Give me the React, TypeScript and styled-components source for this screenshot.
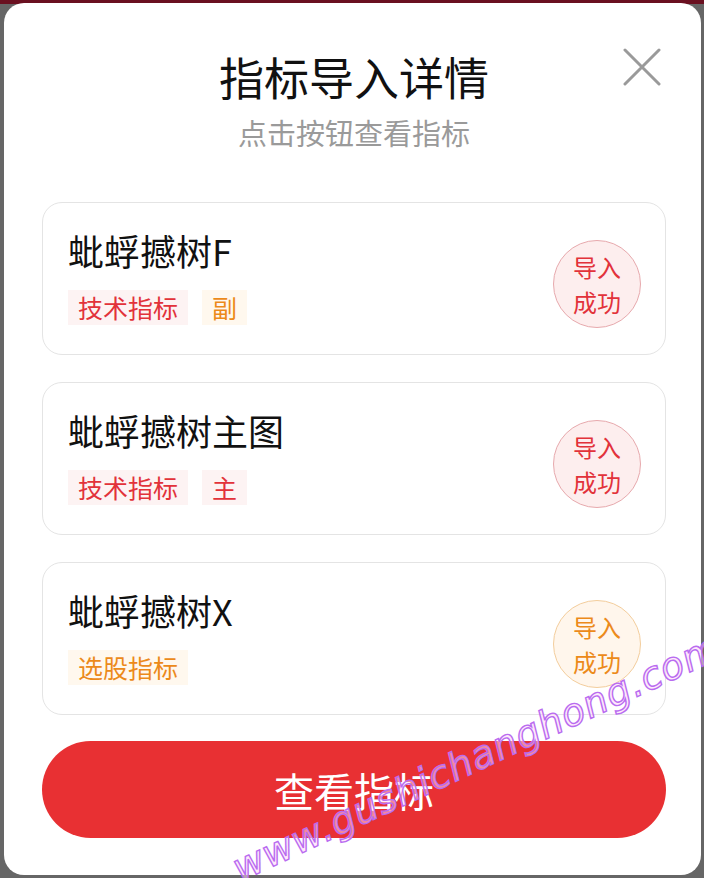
import React from "react";
import styled, { createGlobalStyle } from "styled-components";

const Global = createGlobalStyle`
  html, body { margin: 0; padding: 0; }
  body {
    background: #666666;
    font-family: "Noto Sans CJK SC", "Noto Sans", sans-serif;
    width: 704px;
    height: 878px;
    overflow: hidden;
  }
`;

const Page = styled.div`
  position: relative;
  width: 704px;
  height: 878px;
  box-sizing: border-box;
  padding: 3px 3px 3px 4px;
  background: linear-gradient(#6a1020 0, #6a1020 4px, #666666 4px);
  overflow: hidden;
`;

const Modal = styled.div`
  position: relative;
  height: 872px;
  box-sizing: border-box;
  background: #ffffff;
  border-radius: 20px;
  padding: 46px 35px 37px 38px;
  display: flex;
  flex-direction: column;
`;

const Title = styled.h1`
  margin: 0;
  text-align: center;
  font-size: 45px;
  line-height: 56px;
  font-weight: 400;
  color: #111111;
`;

const Subtitle = styled.p`
  margin: 7px 0 0;
  text-align: center;
  font-size: 29px;
  line-height: 40px;
  color: #9a9a9a;
`;

const Close = styled.button`
  position: absolute;
  top: 45px;
  right: 40px;
  width: 38px;
  height: 38px;
  padding: 0;
  border: none;
  background: transparent;
  svg { display: block; }
`;

const List = styled.div`
  margin-top: 50px;
  display: flex;
  flex-direction: column;
  gap: 27px;
`;

const Card = styled.div`
  height: 153px;
  box-sizing: border-box;
  border: 1px solid #e4e4e4;
  border-radius: 20px;
  padding: 24px 24px 0 25px;
  display: flex;
  justify-content: space-between;
`;

const Info = styled.div`
  display: flex;
  flex-direction: column;
`;

const Name = styled.div`
  font-size: 36px;
  line-height: 46px;
  color: #111111;
`;

const Tags = styled.div`
  margin-top: 17px;
  display: flex;
  gap: 14px;
`;

type Tone = "red" | "orange";

const Tag = styled.span<{ $tone: Tone }>`
  height: 35px;
  padding: 0 10px;
  font-size: 25px;
  line-height: 35px;
  color: ${(p) => (p.$tone === "red" ? "#e2323a" : "#ec8a1a")};
  background: ${(p) => (p.$tone === "red" ? "#fdf3f3" : "#fff8ee")};
`;

const Badge = styled.div<{ $tone: Tone }>`
  align-self: center;
  margin-top: -14px;
  width: 88px;
  height: 88px;
  box-sizing: border-box;
  border-radius: 50%;
  border: 1px solid ${(p) => (p.$tone === "red" ? "#e7a9ad" : "#f3cd9c")};
  background: ${(p) => (p.$tone === "red" ? "#fdeeee" : "#fff6ec")};
  color: ${(p) => (p.$tone === "red" ? "#e2323a" : "#ec8a1a")};
  display: flex;
  flex-direction: column;
  align-items: center;
  justify-content: center;
  font-size: 24px;
  line-height: 35px;
`;

const Button = styled.button`
  margin-top: 26px;
  height: 99px;
  border: none;
  border-radius: 50px;
  background: #e83033;
  color: #ffffff;
  font-family: "Noto Sans CJK SC", "Noto Sans", sans-serif;
  font-size: 40px;
  letter-spacing: 0;
`;

const Watermark = styled.div`
  position: absolute;
  left: 244px;
  top: 846px;
  transform: rotate(-25deg);
  transform-origin: left bottom;
  font-family: "DejaVu Sans", sans-serif;
  font-style: italic;
  font-size: 38px;
  letter-spacing: 1px;
  color: rgba(255, 214, 248, 0.55);
  -webkit-text-stroke: 1.4px #b96cf0;
  white-space: nowrap;
  pointer-events: none;
`;

type Item = {
  name: string;
  tags: { label: string; tone: Tone }[];
  badge: Tone;
};

const items: Item[] = [
  {
    name: "蚍蜉撼树F",
    tags: [
      { label: "技术指标", tone: "red" },
      { label: "副", tone: "orange" },
    ],
    badge: "red",
  },
  {
    name: "蚍蜉撼树主图",
    tags: [
      { label: "技术指标", tone: "red" },
      { label: "主", tone: "red" },
    ],
    badge: "red",
  },
  {
    name: "蚍蜉撼树X",
    tags: [{ label: "选股指标", tone: "orange" }],
    badge: "orange",
  },
];

export default function App() {
  return (
    <Page>
      <Global />
      <Modal>
        <Close aria-label="关闭">
          <svg width="38" height="38" viewBox="0 0 38 38">
            <path
              d="M2 2 L36 36 M36 2 L2 36"
              stroke="#9a9a9a"
              strokeWidth="3"
              strokeLinecap="round"
            />
          </svg>
        </Close>
        <Title>指标导入详情</Title>
        <Subtitle>点击按钮查看指标</Subtitle>
        <List>
          {items.map((it) => (
            <Card key={it.name}>
              <Info>
                <Name>{it.name}</Name>
                <Tags>
                  {it.tags.map((t) => (
                    <Tag key={t.label} $tone={t.tone}>
                      {t.label}
                    </Tag>
                  ))}
                </Tags>
              </Info>
              <Badge $tone={it.badge}>
                <span>导入</span>
                <span>成功</span>
              </Badge>
            </Card>
          ))}
        </List>
        <Button>查看指标</Button>
      </Modal>
      <Watermark>www.gushichanghong.com</Watermark>
    </Page>
  );
}
